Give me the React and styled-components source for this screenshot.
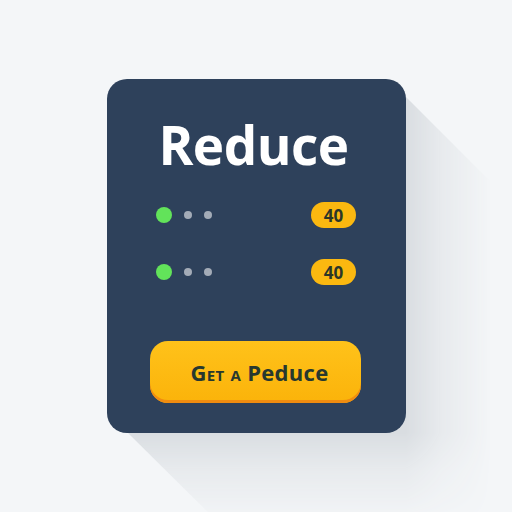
import React from "react";
import styled, { createGlobalStyle } from "styled-components";

const GlobalStyle = createGlobalStyle`
  html, body {
    margin: 0;
    padding: 0;
    background: #f4f6f8;
  }
`;

const Page = styled.div`
  width: 512px;
  height: 512px;
  display: flex;
  align-items: center;
  justify-content: center;
  overflow: hidden;
  font-family: "Open Sans", "Noto Sans", sans-serif;
`;

const Stage = styled.div`
  position: relative;
  margin-left: 1px;
`;

/* flat long shadow falling to the lower right, fading away from the card */
const LongShadow = styled.div`
  position: absolute;
  left: 0;
  top: 0;
  width: 420px;
  height: 470px;
  clip-path: polygon(280px 18px, 299px 18px, 420px 139px, 420px 470px, 138px 470px, 21px 354px, 21px 330px);
  background: #d9dde1;
  mask-image: linear-gradient(to right, #000 0, #000 299px, rgba(0, 0, 0, 0.45) 335px, transparent 385px),
    linear-gradient(to bottom, #000 0, #000 354px, rgba(0, 0, 0, 0.45) 392px, transparent 445px);
  mask-composite: intersect;
  -webkit-mask-composite: source-in;
`;

const Card = styled.div`
  position: relative;
  width: 299px;
  height: 354px;
  box-sizing: border-box;
  padding: 35px 44px 0 44px;
  background: #2e415b;
  border-radius: 20px;
  display: flex;
  flex-direction: column;
`;

const Title = styled.h1`
  margin: 0 6px 0 0;
  text-align: center;
  color: #ffffff;
  font-size: 53px;
  font-weight: 700;
  line-height: 62px;
  letter-spacing: -0.5px;
`;

const Rows = styled.div`
  margin-top: 26px;
  display: flex;
  flex-direction: column;
  gap: 31px;
`;

const Row = styled.div`
  display: flex;
  align-items: center;
  justify-content: space-between;
  height: 26px;
`;

const Dots = styled.div`
  display: flex;
  align-items: center;
  gap: 12px;
  margin-left: 5px;
`;

const Dot = styled.span`
  display: block;
  width: ${props => (props.active ? "16px" : "8px")};
  height: ${props => (props.active ? "16px" : "8px")};
  border-radius: 50%;
  background: ${props => (props.active ? "#62e35a" : "#a3abb7")};
`;

const Badge = styled.span`
  display: flex;
  align-items: center;
  justify-content: center;
  width: 45px;
  height: 26px;
  margin-right: 6px;
  border-radius: 13px;
  background: #fbb810;
  color: #2b3628;
  font-size: 17px;
  font-weight: 700;
`;

const Button = styled.button`
  margin-top: 56px;
  margin-left: -1px;
  padding: 0 0 0 8px;
  width: 211px;
  height: 62px;
  border: none;
  border-radius: 18px;
  background: linear-gradient(180deg, #ffc21a 0%, #fbb30a 100%);
  box-shadow: inset 0 -3px 0 #f08c10;
  color: #27382f;
  font-family: "Open Sans", "Noto Sans", sans-serif;
  font-size: 22px;
  font-weight: 700;
  letter-spacing: 0.3px;
  cursor: pointer;
`;

const SmallCaps = styled.span`
  font-variant: small-caps;
`;

export default function App() {
  return (
    <>
      <GlobalStyle />
      <Page>
        <Stage>
          <LongShadow />
          <Card>
            <Title>Reduce</Title>
            <Rows>
              <Row>
                <Dots>
                  <Dot active />
                  <Dot />
                  <Dot />
                </Dots>
                <Badge>40</Badge>
              </Row>
              <Row>
                <Dots>
                  <Dot active />
                  <Dot />
                  <Dot />
                </Dots>
                <Badge>40</Badge>
              </Row>
            </Rows>
            <Button>
              <SmallCaps>Get a</SmallCaps> Peduce
            </Button>
          </Card>
        </Stage>
      </Page>
    </>
  );
}
